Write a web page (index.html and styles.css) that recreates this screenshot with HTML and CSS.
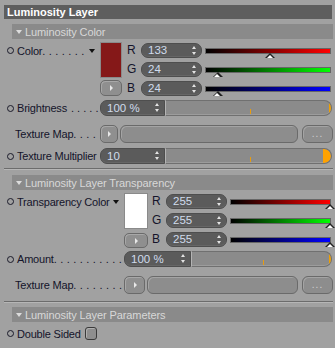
FILE: index.html
```
<!DOCTYPE html>
<html lang="en">
<head>
    <meta charset="UTF-8">
    <title>Luminosity Layer</title>
    <link rel="stylesheet" href="styles.css">
</head>
<body>

<div class="panel">
    <div class="title">Luminosity Layer</div>

    <div class="group-head"><span class="caret"></span>Luminosity Color</div>

    <div class="color-block">
        <div class="label bullet top">Color<span class="dots">. . . . . . .</span><span class="drop"></span></div>
        <div class="swatch-col">
            <div class="swatch" style="background:#851818"></div>
            <button class="play"></button>
        </div>
        <div class="rgb">
            <div class="rgb-row">
                <span class="ch">R</span>
                <div class="field">133<span class="spin"></span></div>
                <div class="slider grad-r"><span class="thumb" style="left:52%"></span></div>
            </div>
            <div class="rgb-row">
                <span class="ch">G</span>
                <div class="field">24<span class="spin"></span></div>
                <div class="slider grad-g"><span class="thumb" style="left:9.4%"></span></div>
            </div>
            <div class="rgb-row">
                <span class="ch">B</span>
                <div class="field">24<span class="spin"></span></div>
                <div class="slider grad-b"><span class="thumb" style="left:9.4%"></span></div>
            </div>
        </div>
    </div>

    <div class="row row-num">
        <div class="label bullet">Brightness<span class="dots lead">. . . . .</span></div>
        <div class="numslider">
            <div class="field">100 %<span class="spin"></span></div>
            <div class="track"><span class="tick"></span><span class="end-thin"></span></div>
        </div>
    </div>

    <div class="row row-tex">
        <div class="label plain">Texture Map<span class="dots">. . . .</span></div>
        <button class="play"></button>
        <div class="texbar"></div>
        <button class="more">...</button>
    </div>

    <div class="row row-mult">
        <div class="label bullet">Texture Multiplier</div>
        <div class="numslider">
            <div class="field">10<span class="spin"></span></div>
            <div class="track"><span class="tick"></span><span class="end-full"></span></div>
        </div>
    </div>

    <div class="sep"></div>

    <div class="group-head"><span class="caret"></span>Luminosity Layer Transparency</div>

    <div class="color-block wide">
        <div class="label bullet top">Transparency Color<span class="drop"></span></div>
        <div class="swatch-col">
            <div class="swatch" style="background:#ffffff"></div>
            <button class="play"></button>
        </div>
        <div class="rgb">
            <div class="rgb-row">
                <span class="ch">R</span>
                <div class="field">255<span class="spin"></span></div>
                <div class="slider grad-r"><span class="thumb" style="left:100%"></span></div>
            </div>
            <div class="rgb-row">
                <span class="ch">G</span>
                <div class="field">255<span class="spin"></span></div>
                <div class="slider grad-g"><span class="thumb" style="left:100%"></span></div>
            </div>
            <div class="rgb-row">
                <span class="ch">B</span>
                <div class="field">255<span class="spin"></span></div>
                <div class="slider grad-b"><span class="thumb" style="left:100%"></span></div>
            </div>
        </div>
    </div>

    <div class="row row-amount wide">
        <div class="label bullet">Amount<span class="dots">. . . . . . . . . . .</span></div>
        <div class="numslider">
            <div class="field">100 %<span class="spin"></span></div>
            <div class="track"><span class="tick"></span><span class="end-thin"></span></div>
        </div>
    </div>

    <div class="row row-tex2 wide">
        <div class="label plain">Texture Map<span class="dots">. . . . . . . .</span></div>
        <button class="play"></button>
        <div class="texbar"></div>
        <button class="more">...</button>
    </div>

    <div class="sep sep2"></div>

    <div class="group-head gh3"><span class="caret"></span>Luminosity Layer Parameters</div>

    <div class="row row-double">
        <div class="label bullet auto">Double Sided</div>
        <span class="check"></span>
    </div>
</div>

</body>
</html>
```

FILE: styles.css
```
* {
    box-sizing: border-box;
}

body {
    margin: 0;
    width: 335px;
    height: 348px;
    overflow: hidden;
    background: #a1a1a1;
    font-family: 'Liberation Sans', Arial, sans-serif;
    font-size: 11px;
    color: #14142a;
}

.panel {
    padding: 5px 3px 0 4px;
}

.title {
    height: 14px;
    line-height: 14px;
    padding-left: 3px;
    background: #5e5e5e;
    color: #fff;
    font-weight: bold;
}

.group-head {
    display: flex;
    align-items: center;
    height: 15px;
    margin: 5px -1px 0 8px;
    padding-left: 4px;
    background: #8a8a8a;
    color: #d8d8d8;
    letter-spacing: -0.1px;
}

.caret {
    width: 0;
    height: 0;
    margin-right: 3px;
    border-left: 3.5px solid transparent;
    border-right: 3.5px solid transparent;
    border-top: 4px solid #dcdcdc;
}

/* labels */
.label {
    display: flex;
    align-items: center;
    flex: none;
    width: 96px;
    height: 15px;
    padding-left: 3px;
    white-space: nowrap;
    letter-spacing: -0.2px;
}

.wide .label {
    width: 120px;
}

.label.auto {
    width: auto;
}

.label.plain {
    padding-left: 11px;
}

.bullet::before {
    content: '';
    flex: none;
    width: 5px;
    height: 5px;
    margin-right: 3px;
    border: 1px solid #1a1a2a;
    border-radius: 50%;
}

.label.top {
    margin-top: 1px;
}

.dots {
    display: block;
    flex: none;
    color: #14142a;
    letter-spacing: 0.2px;
}

.dots.lead {
    margin-left: 4px;
    letter-spacing: 0;
}

.drop {
    flex: none;
    width: 0;
    height: 0;
    margin: 0 5px 0 auto;
    border-left: 3.5px solid transparent;
    border-right: 3.5px solid transparent;
    border-top: 4px solid #111;
}

/* colour blocks */
.color-block {
    display: flex;
    align-items: flex-start;
    margin-top: 3px;
}

.swatch-col {
    display: flex;
    flex-direction: column;
    width: 22px;
}

.wide .swatch-col {
    width: 24px;
}

.swatch {
    height: 36px;
    border: 1px solid #8a8a8a;
}

.swatch-col .play {
    width: 100%;
    height: 16px;
    margin-top: 2px;
}

.wide .swatch-col .play {
    height: 15px;
    margin-top: 4px;
}

.rgb {
    display: flex;
    flex-direction: column;
    gap: 4px;
    flex: 1;
    margin: 1px 1px 0 5px;
}

.wide .rgb {
    margin-left: 4px;
}

.rgb-row {
    display: flex;
    align-items: flex-start;
    height: 15px;
}

.ch {
    width: 14px;
    line-height: 15px;
    font-size: 12px;
}

.rgb-row .field {
    width: 61px;
}

/* number fields */
.field {
    position: relative;
    flex: none;
    height: 15px;
    line-height: 13px;
    padding-left: 6px;
    border: 1px solid #4e4e4e;
    border-radius: 7px;
    background: #5b5b5b;
    box-shadow: inset 0 -1px 0 #666;
    color: #d0dcec;
    font-size: 11.5px;
}

.spin {
    position: absolute;
    right: 4px;
    top: 2px;
    width: 5px;
    height: 9px;
}

.spin::before,
.spin::after {
    content: '';
    position: absolute;
    left: 0;
    border-left: 2.5px solid transparent;
    border-right: 2.5px solid transparent;
}

.spin::before {
    top: 0;
    border-bottom: 3px solid #e4e4e4;
}

.spin::after {
    bottom: 0;
    border-top: 3px solid #e4e4e4;
}

/* gradient sliders */
.slider {
    position: relative;
    flex: 1;
    height: 6px;
    margin: 5px 0 0 3px;
    border: 1px solid #666;
}

.grad-r {
    background: linear-gradient(to right, #000, #ff0000);
}

.grad-g {
    background: linear-gradient(to right, #000, #00ff00);
}

.grad-b {
    background: linear-gradient(to right, #000, #0000ff);
}

.thumb {
    position: absolute;
    top: 4px;
    width: 0;
    height: 0;
    margin-left: -5px;
    border-left: 5px solid transparent;
    border-right: 5px solid transparent;
    border-bottom: 5px solid #222;
}

.thumb::after {
    content: '';
    position: absolute;
    left: -3.5px;
    top: 1.5px;
    border-left: 3.5px solid transparent;
    border-right: 3.5px solid transparent;
    border-bottom: 3.5px solid #fff;
}

/* rows */
.row {
    display: flex;
    align-items: center;
}

.row-num {
    margin-top: 4px;
    height: 16px;
}

.row-tex {
    margin-top: 9px;
    height: 18px;
}

.row-mult {
    margin-top: 5px;
    height: 16px;
}

.row-amount {
    margin-top: 3px;
    height: 16px;
}

.row-tex2 {
    margin-top: 9px;
    height: 18px;
}

.row-double {
    margin-top: 4px;
    height: 15px;
}

.numslider {
    display: flex;
    flex: 1;
    min-width: 0;
    height: 16px;
}

.numslider .field {
    width: 65px;
    height: 16px;
    line-height: 14px;
    border-radius: 7px 0 0 7px;
}

.wide .numslider .field {
    width: 67px;
}

.track {
    position: relative;
    flex: 1;
    border: 1px solid #707070;
    border-left: 1px solid #b4b4b4;
    border-radius: 0 8px 8px 0;
    background: #8b8b8b;
    box-shadow: inset 0 -1px 0 #9c9c9c;
    overflow: hidden;
}

.tick {
    position: absolute;
    left: 51%;
    bottom: 1px;
    width: 1px;
    height: 5px;
    background: #e89c10;
}

.end-thin {
    position: absolute;
    right: 0;
    top: 2px;
    width: 2px;
    height: 10px;
    background: #f0a000;
}

.end-full {
    position: absolute;
    right: 0;
    top: 0;
    width: 8px;
    height: 100%;
    border-radius: 0 7px 7px 0;
    background: #ffa200;
}

/* buttons */
button {
    font-family: inherit;
    padding: 0;
    cursor: pointer;
}

.play {
    position: relative;
    flex: none;
    height: 18px;
    border: 1px solid #6a6a6a;
    border-radius: 5px;
    background: #8f8f8f;
    box-shadow: inset 1px 1px 0 #a8a8a8;
}

.play::after {
    content: '';
    position: absolute;
    left: 50%;
    top: 50%;
    margin: -3px 0 0 -1px;
    border-top: 3px solid transparent;
    border-bottom: 3px solid transparent;
    border-left: 3px solid #e8e8e8;
}

.row-tex .play {
    width: 18px;
}

.row-tex2 .play {
    width: 21px;
}

.texbar {
    flex: 1;
    height: 18px;
    margin-left: 2px;
    border: 1px solid #6a6a6a;
    border-radius: 6px;
    background: #8d8d8d;
    box-shadow: inset 1px 1px 0 #a4a4a4;
}

.more {
    flex: none;
    width: 31px;
    height: 18px;
    margin: 0 -1px 0 4px;
    border: 1px solid #6a6a6a;
    border-radius: 6px;
    background: #8d8d8d;
    box-shadow: inset 1px 1px 0 #a4a4a4;
    color: #d0d0d0;
    font-size: 10px;
    line-height: 12px;
    letter-spacing: 1px;
}

.sep {
    margin: 4px -1px 0 0;
    height: 2px;
    border-top: 1px solid #6c6c6c;
    border-bottom: 1px solid #b6b6b6;
}

.sep2 {
    margin-top: 7px;
}

.gh3 {
    margin-top: 4px;
}

.check {
    width: 12px;
    height: 13px;
    margin-left: 4px;
    border: 1px solid #3a3a3a;
    border-radius: 3px;
    background: #8e8e8e;
    box-shadow: inset 1px 1px 0 #b0b0b0;
}
```
